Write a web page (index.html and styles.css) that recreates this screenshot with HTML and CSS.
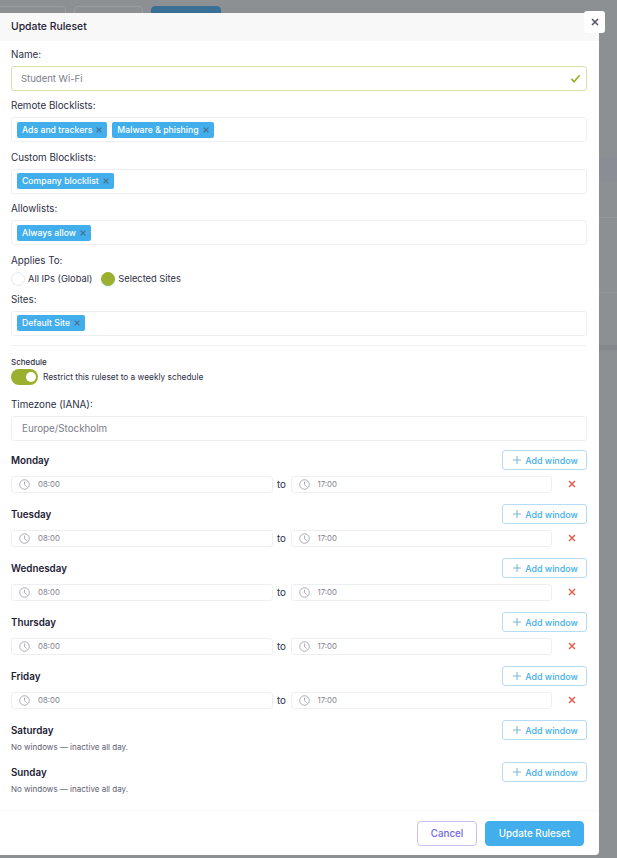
FILE: index.html
```html
<!DOCTYPE html>
<html lang="en">
<head>
    <meta charset="UTF-8">
    <meta name="viewport" content="width=device-width, initial-scale=1.0">
    <title>Update Ruleset</title>
    <link rel="stylesheet" href="styles.css">
</head>
<body>
    <svg class="sprite" width="0" height="0">
        <symbol id="clock" viewBox="0 0 12 12">
            <circle cx="6" cy="6" r="5.2" fill="none" stroke="currentColor" stroke-width="0.8"/>
            <path d="M6 2.8V6.2L8.2 8.4" fill="none" stroke="currentColor" stroke-width="0.8"/>
        </symbol>
        <symbol id="plus" viewBox="0 0 10 10">
            <path d="M5 1V9M1 5H9" fill="none" stroke="currentColor" stroke-width="0.9"/>
        </symbol>
        <symbol id="cross" viewBox="0 0 10 10">
            <path d="M2 2L8 8M8 2L2 8" fill="none" stroke="currentColor" stroke-width="1.5"/>
        </symbol>
    </svg>

    <!-- page behind the dialog -->
    <div class="backdrop">
        <div class="backdrop-tabs">
            <span class="backdrop-tab"></span>
            <span class="backdrop-tab"></span>
            <span class="backdrop-tab active"></span>
        </div>
        <div class="backdrop-table">
            <div class="backdrop-thead"></div>
            <div class="backdrop-row first"></div>
            <div class="backdrop-row second"></div>
            <div class="backdrop-thead small"></div>
        </div>
    </div>

    <div class="modal">
        <div class="modal-header">Update Ruleset</div>
        <button class="modal-close"><svg><use href="#cross"/></svg></button>

        <div class="modal-body">
            <div class="field">
                <label>Name:</label>
                <div class="input valid">
                    <span>Student Wi-Fi</span>
                    <svg class="check" viewBox="0 0 12 12"><path d="M1.5 6.5L4.5 9.5L10.5 2.5" fill="none" stroke="#9cb02f" stroke-width="1.9"/></svg>
                </div>
            </div>
            <div class="field">
                <label>Remote Blocklists:</label>
                <div class="tags">
                    <span class="tag">Ads and trackers <svg><use href="#cross"/></svg></span>
                    <span class="tag">Malware &amp; phishing <svg><use href="#cross"/></svg></span>
                </div>
            </div>
            <div class="field">
                <label>Custom Blocklists:</label>
                <div class="tags">
                    <span class="tag">Company blocklist <svg><use href="#cross"/></svg></span>
                </div>
            </div>
            <div class="field">
                <label>Allowlists:</label>
                <div class="tags">
                    <span class="tag">Always allow <svg><use href="#cross"/></svg></span>
                </div>
            </div>
            <div class="field applies">
                <label>Applies To:</label>
                <div class="radios">
                    <span class="radio"></span><span class="radio-text">All IPs (Global)</span>
                    <span class="radio checked"></span><span class="radio-text">Selected Sites</span>
                </div>
            </div>
            <div class="field">
                <label>Sites:</label>
                <div class="tags">
                    <span class="tag">Default Site <svg><use href="#cross"/></svg></span>
                </div>
            </div>

            <hr class="divider">

            <div class="schedule-title">Schedule</div>
            <div class="switch-row">
                <span class="switch"></span>
                <span>Restrict this ruleset to a weekly schedule</span>
            </div>

            <div class="field timezone">
                <label>Timezone (IANA):</label>
                <div class="input zone"><span>Europe/Stockholm</span></div>
            </div>

            <div class="day">
                <div class="day-head"><strong>Monday</strong><button class="add-window"><svg><use href="#plus"/></svg><span>Add window</span></button></div>
                <div class="window">
                    <div class="time"><svg><use href="#clock"/></svg>08:00</div><span class="to">to</span>
                    <div class="time"><svg><use href="#clock"/></svg>17:00</div><svg class="remove"><use href="#cross"/></svg>
                </div>
            </div>
            <div class="day">
                <div class="day-head"><strong>Tuesday</strong><button class="add-window"><svg><use href="#plus"/></svg><span>Add window</span></button></div>
                <div class="window">
                    <div class="time"><svg><use href="#clock"/></svg>08:00</div><span class="to">to</span>
                    <div class="time"><svg><use href="#clock"/></svg>17:00</div><svg class="remove"><use href="#cross"/></svg>
                </div>
            </div>
            <div class="day">
                <div class="day-head"><strong>Wednesday</strong><button class="add-window"><svg><use href="#plus"/></svg><span>Add window</span></button></div>
                <div class="window">
                    <div class="time"><svg><use href="#clock"/></svg>08:00</div><span class="to">to</span>
                    <div class="time"><svg><use href="#clock"/></svg>17:00</div><svg class="remove"><use href="#cross"/></svg>
                </div>
            </div>
            <div class="day">
                <div class="day-head"><strong>Thursday</strong><button class="add-window"><svg><use href="#plus"/></svg><span>Add window</span></button></div>
                <div class="window">
                    <div class="time"><svg><use href="#clock"/></svg>08:00</div><span class="to">to</span>
                    <div class="time"><svg><use href="#clock"/></svg>17:00</div><svg class="remove"><use href="#cross"/></svg>
                </div>
            </div>
            <div class="day">
                <div class="day-head"><strong>Friday</strong><button class="add-window"><svg><use href="#plus"/></svg><span>Add window</span></button></div>
                <div class="window">
                    <div class="time"><svg><use href="#clock"/></svg>08:00</div><span class="to">to</span>
                    <div class="time"><svg><use href="#clock"/></svg>17:00</div><svg class="remove"><use href="#cross"/></svg>
                </div>
            </div>
            <div class="day empty">
                <div class="day-head"><strong>Saturday</strong><button class="add-window"><svg><use href="#plus"/></svg><span>Add window</span></button></div>
                <div class="no-windows">No windows — inactive all day.</div>
            </div>
            <div class="day empty">
                <div class="day-head"><strong>Sunday</strong><button class="add-window"><svg><use href="#plus"/></svg><span>Add window</span></button></div>
                <div class="no-windows">No windows — inactive all day.</div>
            </div>
        </div>

        <div class="modal-footer">
            <button class="btn btn-cancel">Cancel</button>
            <button class="btn btn-primary">Update Ruleset</button>
        </div>
    </div>
</body>
</html>
```

FILE: styles.css
```css
html, body {
    margin: 0;
    height: 858px;
    overflow: hidden;
}
body {
    font-family: Inter, "Noto Sans", sans-serif;
    font-size: 9.8px;
    color: #2c2f45;
    background-color: #8d9092;
}
.sprite {
    position: absolute;
}
button {
    font-family: inherit;
    cursor: pointer;
}

/* page behind the dialog */
.backdrop-tabs {
    display: flex;
    gap: 8px;
    padding-top: 6px;
    margin-left: -3px;
}
.backdrop-tab {
    box-sizing: border-box;
    width: 69px;
    height: 20px;
    border: 1px solid #999ca0;
    border-radius: 4px;
}
.backdrop-tab.active {
    width: 70px;
    background-color: #3a6f96;
    border-color: #3a6f96;
}
.backdrop-table {
    margin-top: 131px;
}
.backdrop-thead {
    height: 25px;
    background-color: #8a8d93;
}
.backdrop-thead.small {
    height: 5px;
    margin-top: 52px;
    background-color: #84878c;
}
.backdrop-row {
    box-sizing: border-box;
    border-bottom: 1px solid #94979a;
}
.backdrop-row.first {
    height: 36px;
}
.backdrop-row.second {
    height: 75px;
}

.modal {
    position: absolute;
    top: 13px;
    left: 0;
    width: 599px;
    height: 842px;
    background-color: #fff;
    border-radius: 0 0 4px 0;
}
.modal-header {
    height: 28px;
    line-height: 27px;
    padding-left: 11px;
    background-color: #f8f8f8;
    font-size: 10.4px;
    font-weight: 500;
    color: #1e2036;
}
.modal-close {
    position: absolute;
    top: -2px;
    right: -6px;
    width: 21px;
    height: 22px;
    padding: 0;
    border: none;
    border-radius: 3px;
    background-color: #fff;
    color: #4d5068;
    display: flex;
    align-items: center;
    justify-content: center;
}
.modal-close svg {
    width: 10px;
    height: 10px;
}
.modal-body {
    padding: 7px 12px 0 11px;
}

.field label {
    display: block;
    height: 12px;
    line-height: 14px;
    margin-bottom: 6px;
}
.field {
    margin-bottom: 8.4px;
}
.input {
    height: 25px;
    box-sizing: border-box;
    border: 1px solid #eeeff2;
    border-radius: 3px;
    padding: 0 9px;
    display: flex;
    align-items: center;
    justify-content: space-between;
    color: #7a7d8a;
}
.input.valid {
    border-color: #d7e0a6;
    font-size: 9.5px;
}
.input.zone {
    padding-left: 10px;
}
.check {
    width: 11px;
    height: 11px;
    margin-right: -4px;
}
.tags {
    height: 25px;
    box-sizing: border-box;
    border: 1px solid #eeeff2;
    border-radius: 3px;
    padding: 0 5px;
    display: flex;
    align-items: center;
    gap: 5px;
}
.tag {
    height: 16px;
    padding: 0 4px 0 5px;
    display: flex;
    align-items: center;
    gap: 3px;
    background-color: #42aeec;
    border-radius: 2px;
    color: #fff;
    font-size: 8.7px;
    font-weight: 500;
}
.tag svg {
    width: 8px;
    height: 8px;
    color: #4a6f8c;
}

.applies {
    margin-bottom: 6px;
}
.applies label {
    margin-bottom: 5px;
}
.radios {
    display: flex;
    align-items: center;
    height: 16px;
}
.radio {
    box-sizing: border-box;
    width: 14px;
    height: 14px;
    border: 1px solid #e8e9ec;
    border-radius: 50%;
    margin-right: 3px;
}
.radio.checked {
    background-color: #9cb02f;
    border-color: #9cb02f;
    margin-left: 9px;
    box-shadow: 0 1px 2px rgba(66, 174, 236, 0.25);
}
.radio-text {
    font-size: 9.3px;
    padding-bottom: 1px;
}

.divider {
    border: none;
    border-top: 1px solid #f1f1f3;
    margin: 9.4px 0 10px;
}
.schedule-title {
    font-size: 8px;
    font-weight: 500;
    height: 10px;
    line-height: 12px;
    margin-bottom: 3px;
}
.switch-row {
    display: flex;
    align-items: center;
    gap: 5px;
    font-size: 8.3px;
    height: 16px;
    margin-bottom: 13px;
}
.switch {
    position: relative;
    width: 27px;
    height: 16px;
    border-radius: 8px;
    background-color: #9cb02f;
}
.switch::after {
    content: "";
    position: absolute;
    top: 3px;
    right: 2px;
    width: 10px;
    height: 10px;
    border-radius: 50%;
    background-color: #fff;
}
.timezone {
    margin-bottom: 9px;
}

.day.empty {
    margin-bottom: 9px;
}
.day-head {
    display: flex;
    align-items: center;
    justify-content: space-between;
    height: 20px;
    margin-bottom: 6px;
}
.day-head strong {
    padding-top: 1px;
    font-size: 9.8px;
    font-weight: 600;
    color: #1e2036;
}
.add-window {
    width: 85px;
    height: 20px;
    padding: 0;
    display: flex;
    align-items: center;
    justify-content: center;
    gap: 3px;
    background-color: #fff;
    border: 1px solid #b5dcf6;
    border-radius: 3px;
    color: #42aeec;
    font-size: 8.9px;
    font-weight: 500;
}
.add-window svg {
    width: 10px;
    height: 10px;
    margin-left: 1px;
    color: #6fa9d2;
}
.add-window span {
    padding-top: 2px;
}
.window {
    display: flex;
    align-items: center;
    height: 17px;
    margin-bottom: 11px;
}
.time {
    flex: 1;
    height: 17px;
    box-sizing: border-box;
    border: 1px solid #eeeff2;
    border-radius: 3px;
    display: flex;
    align-items: center;
    gap: 8px;
    padding-left: 7px;
    font-size: 7.8px;
    color: #80838f;
}
.time svg {
    width: 11px;
    height: 11px;
    color: #8e919b;
}
.to {
    width: 18px;
    text-align: center;
}
.remove {
    width: 10px;
    height: 10px;
    margin: 0 10px 0 15px;
    color: #e4604e;
}
.no-windows {
    font-size: 8px;
    color: #5e6070;
    margin-top: -5px;
    height: 12px;
    line-height: 12px;
}

.modal-footer {
    position: absolute;
    left: 0;
    right: 0;
    bottom: 0;
    height: 45px;
    border-top: 1px solid #f8f8f9;
    box-sizing: border-box;
    padding-top: 10px;
    padding-right: 15px;
    display: flex;
    justify-content: flex-end;
    gap: 8px;
}
.btn {
    height: 25px;
    border-radius: 4px;
    font-size: 9.8px;
    font-weight: 500;
    padding: 0;
}
.btn-cancel {
    width: 60px;
    background-color: #fff;
    border: 1px solid #c6c3f3;
    color: #6f67e0;
}
.btn-primary {
    width: 99px;
    background-color: #42aeec;
    border: 1px solid #42aeec;
    color: #fff;
}
```
